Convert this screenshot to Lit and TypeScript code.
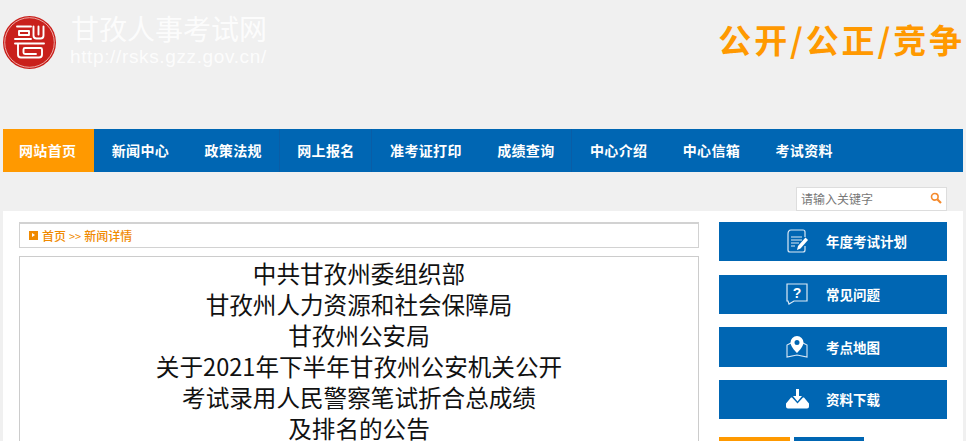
import { LitElement, html, css } from "lit";
import { customElement } from "lit/decorators.js";

const NAV = ["网站首页", "新闻中心", "政策法规", "网上报名", "准考证打印", "成绩查询", "中心介绍", "中心信箱", "考试资料"];
const TITLE = ["中共甘孜州委组织部", "甘孜州人力资源和社会保障局", "甘孜州公安局", "关于2021年下半年甘孜州公安机关公开", "考试录用人民警察笔试折合总成绩", "及排名的公告"];

const ICONS = [
  html`<svg viewBox="0 0 22 24" width="22" height="24" fill="none" stroke="#dbe9f6" stroke-width="1.2"><path d="M5 1h12c1.500 0 2 1 2 2v5M2 5v16c0 1.300 1 2 2 2h13c1.300 0 2-1 2-2v-4M2 5c0-2 1-4 3-4"/><path d="M5 8h11M5 11h11M5 14h8M5 17h4" stroke-width="1.200"/><path d="M19.500 8.500l2.500 2.500-7.500 8.500-3.500 1.500 1-4z" fill="#fff" stroke="none"/></svg>`,
  html`<svg viewBox="0 0 22 22" width="22" height="22" fill="none" stroke="#dbe9f6" stroke-width="1.2"><path d="M1 1h20v17H8l-5 3-1-3H1z"/><text x="11" y="15" font-size="14" text-anchor="middle" fill="#fff" stroke="none" font-family="Liberation Sans">?</text></svg>`,
  html`<svg viewBox="0 0 22 23" width="22" height="23" fill="none"><path d="M5 8L1 10v12l10-2 10 2V10l-4-2" stroke="#dbe9f6" stroke-width="1.100"/><path fill="#fff" fill-rule="evenodd" d="M11 1a6.500 6.500 0 0 1 6.500 6.500C17.500 12 11 18 11 18S4.500 12 4.500 7.500A6.500 6.500 0 0 1 11 1zm0 4a2.500 2.500 0 1 0 0 5 2.500 2.500 0 0 0 0-5z"/></svg>`,
  html`<svg viewBox="0 0 23 20" width="23" height="20" fill="#fff"><path d="M10 0h3v7h3l-4.500 5.500L7 7h3z"/><path d="M5 8.500h1l5.500 6 5.500-6h1l5 6v3a2 2 0 0 1-2 2H2a2 2 0 0 1-2-2v-3z"/></svg>`,
];
const BTN = ["年度考试计划", "常见问题", "考点地图", "资料下载"];

@customElement("app-root")
export class AppRoot extends LitElement {
  static styles = css`
    :host { display: block; height: 441px; overflow: hidden; background: #f0f0f0; font-family: "Noto Sans CJK SC", "Liberation Sans", sans-serif; }
    .head { height: 129px; display: flex; justify-content: space-between; align-items: flex-start; box-sizing: border-box; padding: 16px 1px 0 3px; }
    .brand { display: flex; gap: 15px; }
    .seal { display: block; }
    .names { color: #fff; opacity: .85; margin-top: -3px; }
    .site { font-size: 28px; line-height: 30px; }
    .url { font-family: "Liberation Sans", sans-serif; font-size: 19px; line-height: 22px; letter-spacing: .63px; margin-top: 3px; margin-left: -1px; }
    .slogan { color: #ff9900; font-size: 33px; line-height: 36px; font-weight: 700; letter-spacing: 2.900px; margin-top: 5px; white-space: nowrap; }
    nav { display: flex; height: 43px; margin: 0 3px; background: #0066b3; }
    nav a { padding: 0 17.700px; line-height: 43px; color: #fff; font-size: 14px; letter-spacing: .35px; font-weight: 700; white-space: nowrap; }
    nav a.on { background: #ff9900; padding: 0 0 0 16px; box-sizing: border-box; width: 91px; }
    nav a.sep { box-shadow: inset -1px 0 #0a5da6; }
    .tools { height: 39px; display: flex; justify-content: flex-end; align-items: flex-end; padding-right: 19px; }
    .search { box-sizing: border-box; width: 151px; height: 24px; background: #fff; border: 1px solid #ddd; display: flex; align-items: center; justify-content: space-between; padding: 0 4px 2px; font-size: 12px; color: #777; }
    .panel { margin: 0 3px; background: #fff; display: flex; gap: 20px; padding: 11px 16px 0; height: 230px; }
    .left { width: 680px; flex: none; }
    .crumb { box-sizing: border-box; height: 26px; border: 1px solid #d2d2d2; border-top-width: 2px; display: flex; align-items: center; gap: 3px; padding-left: 9px; color: #f08a00; font-size: 12px; font-weight: 500; }
    .mark { width: 9px; height: 9px; background: #f08a00; position: relative; margin-right: 1px; }
    .mark::after { content: ""; position: absolute; left: 3px; top: 2px; border-left: 3px solid #fff; border-top: 2.500px solid transparent; border-bottom: 2.500px solid transparent; }
    .sign { font-size: 11px; font-weight: 400; }
    .article { box-sizing: border-box; margin-top: 8px; border: 1px solid #ccc; border-bottom: 0; height: 200px; padding-top: 1px; text-align: center; font-size: 23.600px; line-height: 31px; color: #111; }
    .side { width: 228px; flex: none; display: flex; flex-direction: column; }
    .btn { box-sizing: border-box; height: 39px; background: #0066b3; color: #fff; display: flex; align-items: center; font-size: 13.500px; font-weight: 700; margin-bottom: 13px; padding: 0 0 1px 67px; }
    .btn:first-child { margin-bottom: 14px; }
    .btn.tall { height: 40px; }
    .ic { width: 40px; flex: none; display: flex; align-items: center; }
    .tabs { display: flex; gap: 4px; margin-top: 5px; }
    .tabs i { display: block; height: 10px; width: 71px; background: #ff9900; }
    .tabs i + i { width: 70px; background: #0066b3; }
  `;

  render() {
    return html`
      <div class="head">
        <div class="brand">
          <svg class="seal" width="53" height="53" viewBox="0 0 53 53" fill="none">
            <circle cx="26.500" cy="26.500" r="26.500" fill="#c9201c"/>
            <circle cx="26.500" cy="26.500" r="24.800" stroke="#f2c9c4" stroke-width=".8"/>
            <g stroke="#fff" stroke-width="1.900" stroke-linejoin="round" stroke-linecap="round">
              <path d="M14 10.500h14M16 15h10v4H16zM12 23h16"/>
              <path d="M30.500 10.500v9q0 3 3 3h4q3 0 3-3v-9M35.500 10.500v8"/>
              <path d="M12 27.500h29M15 27.500v11q0 3 3 3h18q3 0 3-3v-5q0-1.500-1.500-1.500H22q-1.500 0-1.500 1.500v3q0 1.500 1.500 1.500h11"/>
            </g>
          </svg>
          <div class="names">
            <div class="site">甘孜人事考试网</div>
            <div class="url">http://rsks.gzz.gov.cn/</div>
          </div>
        </div>
        <div class="slogan">公开/公正/竞争</div>
      </div>
      <nav>
        ${NAV.map((n, i) => html`<a class="${i === 0 ? "on" : [2, 3, 5].includes(i) ? "sep" : ""}">${n}</a>`)}
      </nav>
      <div class="tools">
        <div class="search">
          <span>请输入关键字</span>
          <svg width="12" height="12" viewBox="0 0 12 12" fill="none" stroke="#f58a2c"><circle cx="4.800" cy="4.800" r="3.300" stroke-width="1.600"/><path d="M7.500 7.500l3.500 3.500" stroke-width="2.200"/></svg>
        </div>
      </div>
      <div class="panel">
        <div class="left">
          <div class="crumb"><span class="mark"></span><span>首页</span><span class="sign">&gt;&gt;</span><span>新闻详情</span></div>
          <div class="article">${TITLE.map((t) => html`<div>${t}</div>`)}</div>
        </div>
        <div class="side">
          ${BTN.map((b, i) => html`<div class="btn ${i === 2 ? "tall" : ""}"><span class="ic">${ICONS[i]}</span><span>${b}</span></div>`)}
          <div class="tabs"><i></i><i></i></div>
        </div>
      </div>
    `;
  }
}
